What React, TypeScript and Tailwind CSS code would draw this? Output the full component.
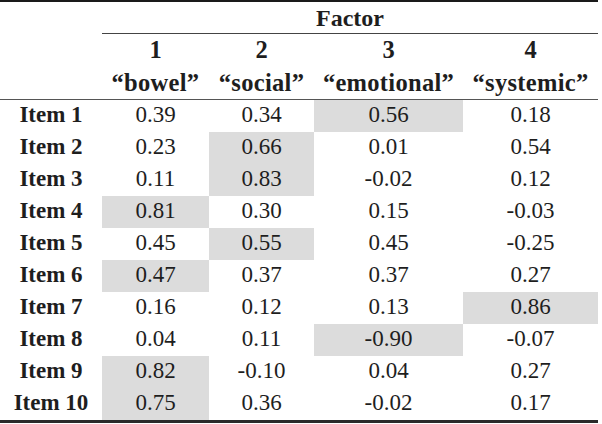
import React from "react";

const rows: { label: string; vals: string[]; hi: number[] }[] = [
  { label: "Item 1", vals: ["0.39", "0.34", "0.56", "0.18"], hi: [2] },
  { label: "Item 2", vals: ["0.23", "0.66", "0.01", "0.54"], hi: [1] },
  { label: "Item 3", vals: ["0.11", "0.83", "-0.02", "0.12"], hi: [1] },
  { label: "Item 4", vals: ["0.81", "0.30", "0.15", "-0.03"], hi: [0] },
  { label: "Item 5", vals: ["0.45", "0.55", "0.45", "-0.25"], hi: [1] },
  { label: "Item 6", vals: ["0.47", "0.37", "0.37", "0.27"], hi: [0] },
  { label: "Item 7", vals: ["0.16", "0.12", "0.13", "0.86"], hi: [3] },
  { label: "Item 8", vals: ["0.04", "0.11", "-0.90", "-0.07"], hi: [2] },
  { label: "Item 9", vals: ["0.82", "-0.10", "0.04", "0.27"], hi: [0] },
  { label: "Item 10", vals: ["0.75", "0.36", "-0.02", "0.17"], hi: [0] },
];

const grid = "grid grid-cols-[102px_107px_105px_149px_135px]";

export default function App() {
  return (
    <div className="w-[602px] h-[424px] bg-white overflow-hidden">
      <div
        className="w-[598px] text-[#1e1e1e] text-[23px]"
        style={{ fontFamily: '"Liberation Serif", "Times New Roman", serif' }}
      >
        <div className="h-[2px] bg-[#1a1a1a]" />
        <div className={grid}>
          <div />
          <div className="col-span-4 h-[32px] flex items-center justify-center font-bold text-[24px] border-b-[1.5px] border-[#444]">
            Factor
          </div>
        </div>
        <div className={`${grid} border-b-[1.5px] border-[#555] font-bold text-[24.5px]`}>
          <div />
          {["1", "2", "3", "4"].map((n) => (
            <div key={n} className="h-[33px] flex items-center justify-center">
              {n}
            </div>
          ))}
          <div />
          {["\u201cbowel\u201d", "\u201csocial\u201d", "\u201cemotional\u201d", "\u201csystemic\u201d"].map((w) => (
            <div key={w} className="h-[32px] flex items-center justify-center whitespace-nowrap tracking-[0.3px]">
              {w}
            </div>
          ))}
        </div>
        {rows.map((r) => (
          <div key={r.label} className={grid}>
            <div className="h-[32px] flex items-center justify-center font-bold pb-[2px]">
              {r.label}
            </div>
            {r.vals.map((v, i) => (
              <div
                key={i}
                className={`h-[32px] flex items-center justify-center pb-[2px] ${
                  r.hi.includes(i) ? "bg-[#dcdcdc]" : ""
                }`}
              >
                {v}
              </div>
            ))}
          </div>
        ))}
        <div className="h-[3px] bg-[#2a2a2a]" />
      </div>
    </div>
  );
}
